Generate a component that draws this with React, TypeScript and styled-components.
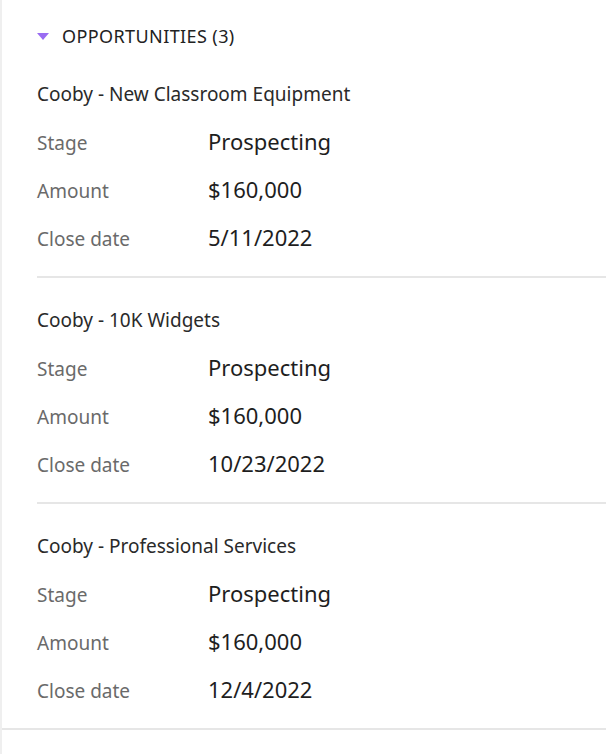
import styled, { createGlobalStyle } from 'styled-components';

const GlobalStyle = createGlobalStyle`
  html, body {
    margin: 0;
    padding: 0;
    background: #ffffff;
  }
  body {
    font-family: 'Noto Sans', 'Open Sans', sans-serif;
  }
`;

const Page = styled.div`
  min-height: 100vh;
  border-left: 2px solid #efefef;
  box-sizing: border-box;
`;

const Section = styled.section`
  border-bottom: 2px solid #e6e6e6;
`;

const SectionHeader = styled.div`
  display: flex;
  align-items: center;
  gap: 13px;
  padding: 24px 0 4px 35px;
  height: 24px;
`;

const Caret = styled.span`
  width: 0;
  height: 0;
  border-left: 6px solid transparent;
  border-right: 6px solid transparent;
  border-top: 7px solid #9a6cf2;
  margin-top: 1px;
`;

const SectionTitle = styled.h2`
  margin: 0;
  font-size: 18px;
  font-weight: 400;
  line-height: 24px;
  color: #222222;
  letter-spacing: 0.4px;
`;

const Card = styled.div<{ $divider: boolean }>`
  margin-left: 35px;
  padding: 30px 0 26px;
  display: flex;
  flex-direction: column;
  gap: 24px;
  border-bottom: ${(p) => (p.$divider ? '2px solid #e6e6e6' : 'none')};
`;

const CardTitle = styled.div`
  font-size: 19px;
  line-height: 24px;
  color: #2a2a2a;
`;

const FieldRow = styled.div`
  display: flex;
  align-items: baseline;
  height: 24px;
  line-height: 23px;
`;

const FieldLabel = styled.span`
  width: 171px;
  font-size: 19px;
  color: #6a6a6a;
`;

const FieldValue = styled.span`
  font-size: 22px;
  color: #1e1e1e;
`;

type Opportunity = {
  name: string;
  stage: string;
  amount: string;
  closeDate: string;
};

const opportunities: Opportunity[] = [
  { name: 'Cooby - New Classroom Equipment', stage: 'Prospecting', amount: '$160,000', closeDate: '5/11/2022' },
  { name: 'Cooby - 10K Widgets', stage: 'Prospecting', amount: '$160,000', closeDate: '10/23/2022' },
  { name: 'Cooby - Professional Services', stage: 'Prospecting', amount: '$160,000', closeDate: '12/4/2022' },
];

function App() {
  return (
    <Page>
      <GlobalStyle />
      <Section>
        <SectionHeader>
          <Caret />
          <SectionTitle>OPPORTUNITIES ({opportunities.length})</SectionTitle>
        </SectionHeader>
        {opportunities.map((o, i) => (
          <Card key={o.name} $divider={i < opportunities.length - 1}>
            <CardTitle>{o.name}</CardTitle>
            <FieldRow>
              <FieldLabel>Stage</FieldLabel>
              <FieldValue>{o.stage}</FieldValue>
            </FieldRow>
            <FieldRow>
              <FieldLabel>Amount</FieldLabel>
              <FieldValue>{o.amount}</FieldValue>
            </FieldRow>
            <FieldRow>
              <FieldLabel>Close date</FieldLabel>
              <FieldValue>{o.closeDate}</FieldValue>
            </FieldRow>
          </Card>
        ))}
      </Section>
    </Page>
  );
}

export default App;
